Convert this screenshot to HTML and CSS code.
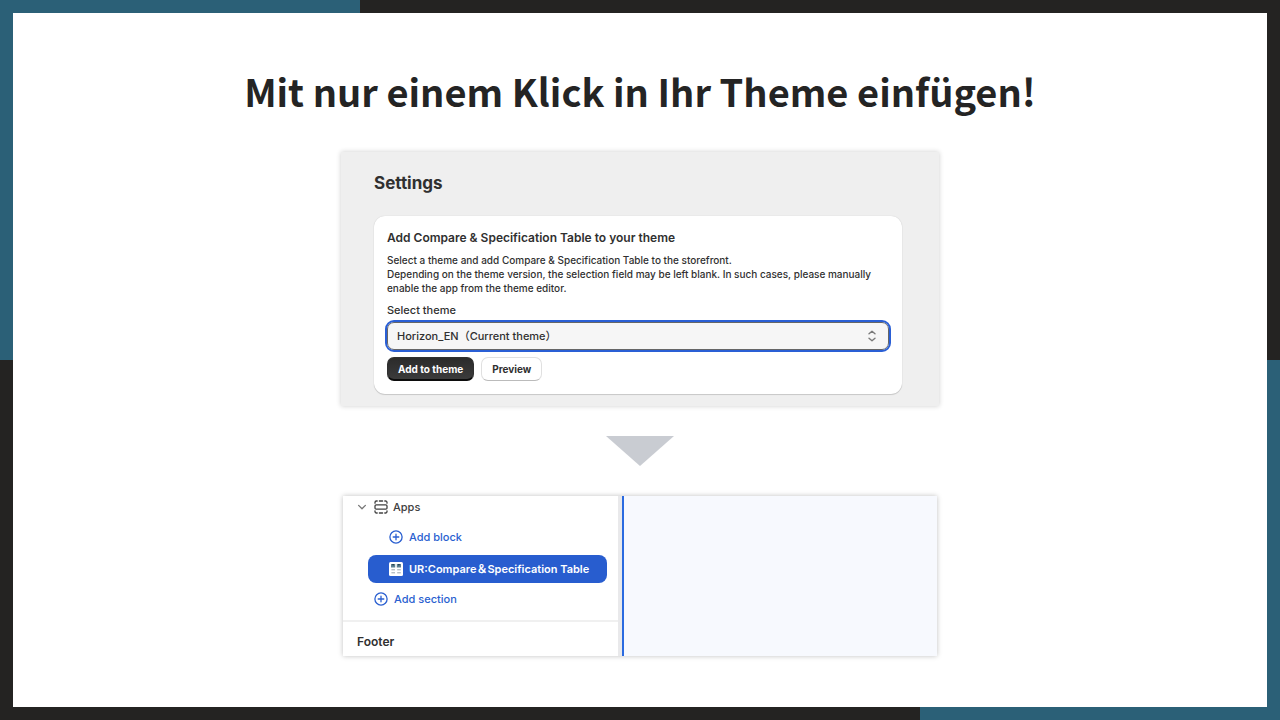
FILE: index.html
```html
<!DOCTYPE html>
<html lang="de">
<head>
    <meta charset="UTF-8">
    <meta name="viewport" content="width=device-width, initial-scale=1.0">
    <title>Mit nur einem Klick in Ihr Theme einfügen!</title>
    <link rel="stylesheet" href="styles.css">
</head>
<body>
    <main class="slide">
        <h1>Mit nur einem Klick in Ihr Theme einfügen!</h1>

        <section class="settings" lang="en">
            <h2>Settings</h2>
            <form class="card">
                <h3>Add Compare &amp; Specification Table to your theme</h3>
                <p>Select a theme and add Compare &amp; Specification Table to the storefront.<br>
                Depending on the theme version, the selection field may be left blank. In such cases, please manually enable the app from the theme editor.</p>
                <label for="theme">Select theme</label>
                <div class="select-wrap">
                    <select id="theme">
                        <option>Horizon_EN（Current theme）</option>
                    </select>
                    <svg class="select-icon" viewBox="0 0 10 14" width="10" height="14">
                        <path d="M2 4.8 L5 2.2 L8 4.8 M2 9.2 L5 11.8 L8 9.2"/>
                    </svg>
                </div>
                <div class="buttons">
                    <button type="button" class="btn btn-primary">Add to theme</button>
                    <button type="button" class="btn">Preview</button>
                </div>
            </form>
        </section>

        <svg class="arrow" viewBox="0 0 68 30" width="68" height="30">
            <path d="M0 0 H68 L34 30 Z"/>
        </svg>

        <section class="editor" lang="en">
            <nav class="sidebar">
                <div class="row row-apps">
                    <svg class="icon chevron" viewBox="0 0 14 14">
                        <path d="M3.6 5.4 L7 8.8 L10.4 5.4"/>
                    </svg>
                    <svg class="icon" viewBox="0 0 14 14">
                        <path d="M1 3.2 V2.4 A1.4 1.4 0 0 1 2.4 1 H3.2 M5.4 1 H8.6 M10.8 1 H11.6 A1.4 1.4 0 0 1 13 2.4 V3.2"/>
                        <path d="M1 10.8 V11.6 A1.4 1.4 0 0 0 2.4 13 H3.2 M5.4 13 H8.6 M10.8 13 H11.6 A1.4 1.4 0 0 0 13 11.6 V10.8"/>
                        <rect x="1" y="4.9" width="12" height="4.2" rx="1.2"/>
                    </svg>
                    <span>Apps</span>
                </div>
                <a href="#" class="row row-block">
                    <svg class="icon" viewBox="0 0 14 14">
                        <circle cx="7" cy="7" r="6.1"/>
                        <path d="M7 4.2 V9.8 M4.2 7 H9.8"/>
                    </svg>
                    <span>Add block</span>
                </a>
                <a href="#" class="row row-active">
                    <svg class="app-icon" viewBox="0 0 14 14" width="14" height="14">
                        <rect width="14" height="14" rx="1.5" fill="#fff"/>
                        <path d="M2 2 H6.2 V5.6 H2 Z M7.8 2 H12 V5.6 H7.8 Z" fill="#5d8191"/>
                        <path d="M3 2 H5.2 L4.1 4 Z M8.8 2 H11 L9.9 4 Z" fill="#24404c"/>
                        <path d="M2.4 7.8 H6 M8.2 7.8 H11.8 M2.4 10.8 H6 M8.2 10.8 H11.8" stroke="#9aa5ad"/>
                    </svg>
                    <span>UR:Compare＆Specification Table</span>
                </a>
                <a href="#" class="row row-section">
                    <svg class="icon" viewBox="0 0 14 14">
                        <circle cx="7" cy="7" r="6.1"/>
                        <path d="M7 4.2 V9.8 M4.2 7 H9.8"/>
                    </svg>
                    <span>Add section</span>
                </a>
                <h2 class="footer-title">Footer</h2>
            </nav>
            <div class="canvas"></div>
        </section>
    </main>
</body>
</html>
```
FILE: styles.css
```css
* {
    margin: 0;
    padding: 0;
    box-sizing: border-box;
}

body {
    min-height: 100vh;
    padding: 13px;
    display: flex;
    background-color: #242322;
    background-image: linear-gradient(#2b6077, #2b6077), linear-gradient(#2b6077, #2b6077);
    background-size: 360px 50%;
    background-position: left top, right bottom;
    background-repeat: no-repeat;
    font-family: Inter, "Noto Sans CJK JP", sans-serif;
    color: #303030;
}

.slide {
    flex: 1;
    display: flex;
    flex-direction: column;
    align-items: center;
    padding: 46px 20px;
    background-color: #fff;
}

h1 {
    font-family: "Noto Sans CJK JP", sans-serif;
    font-size: 38px;
    font-weight: 700;
    line-height: 64px;
    color: #242424;
    text-align: center;
}

/* Settings */
.settings {
    width: 100%;
    max-width: 598px;
    margin-top: 29px;
    padding: 20px 37px 12px 33px;
    background-color: #efefef;
    box-shadow: 0 0 5px rgba(0, 0, 0, 0.2);
}

.settings h2 {
    margin-bottom: 22px;
    font-size: 17px;
    font-weight: 700;
    line-height: 22px;
}

.card {
    padding: 14px 13px 13px;
    background-color: #fff;
    border-radius: 11px;
    box-shadow: 0 1px 1px rgba(0, 0, 0, 0.15), 0 0 1px rgba(0, 0, 0, 0.2);
}

.card h3 {
    margin-bottom: 7px;
    font-size: 12px;
    font-weight: 600;
    line-height: 16px;
}

.card p {
    margin-bottom: 7px;
    font-size: 10px;
    font-weight: 500;
    line-height: 14px;
}

.card label {
    display: block;
    margin-bottom: 4px;
    font-size: 11px;
    font-weight: 500;
    line-height: 16px;
}

.select-wrap {
    position: relative;
    margin-bottom: 7px;
}

.select-wrap select {
    display: block;
    width: 100%;
    height: 28px;
    padding: 0 30px 0 9px;
    appearance: none;
    background-color: #f6f6f6;
    border: 1px solid #666;
    border-radius: 7px;
    outline: 2px solid #2a5fd5;
    font: inherit;
    font-size: 11px;
    font-weight: 500;
    color: #303030;
}

.select-icon {
    position: absolute;
    top: 7px;
    right: 12px;
    fill: none;
    stroke: #7a7a7a;
    stroke-width: 1.4;
    stroke-linecap: round;
    stroke-linejoin: round;
    pointer-events: none;
}

.buttons {
    display: flex;
    gap: 7px;
}

.btn {
    height: 24px;
    padding: 0 10px;
    background-color: #fff;
    border: 1px solid #e0e0e0;
    border-bottom-color: #bbb;
    border-radius: 7px;
    font: inherit;
    font-size: 10px;
    font-weight: 700;
    color: #303030;
    cursor: pointer;
}

.btn-primary {
    background-image: linear-gradient(#2b2b2b, #3b3b3b);
    border-color: #303030;
    border-bottom: 2px solid #0c0c0c;
    color: #fff;
}

.arrow {
    margin: 30px 0;
    fill: #c9ccd2;
}

/* Theme editor */
.editor {
    width: 100%;
    max-width: 594px;
    display: flex;
    box-shadow: 0 0 5px rgba(0, 0, 0, 0.25);
}

.sidebar {
    width: 275px;
    background-color: #fff;
    font-size: 11px;
    font-weight: 500;
    line-height: 14px;
}

.row {
    display: flex;
    align-items: center;
    gap: 6px;
    height: 28px;
    color: #2a5fd0;
    text-decoration: none;
}

.icon {
    width: 14px;
    height: 14px;
    fill: none;
    stroke: currentColor;
    stroke-width: 1.3;
    stroke-linecap: round;
    stroke-linejoin: round;
}

.chevron {
    color: #777;
}

.row-apps {
    height: 22px;
    margin-bottom: 5px;
    padding-left: 12px;
    gap: 5px;
    color: #404040;
}

.row-block {
    padding-left: 46px;
    margin-bottom: 4px;
}

.row-active {
    margin: 0 11px 2px 25px;
    padding-left: 21px;
    background-color: #285dcf;
    border-radius: 8px;
    font-weight: 600;
    color: #fff;
}

.row-active span {
    height: 14px;
}

.row-section {
    padding-left: 31px;
}

.footer-title {
    margin-top: 7px;
    padding: 6px 14px 0;
    border-top: 2px solid #f0f0f0;
    font-size: 12px;
    font-weight: 600;
    line-height: 28px;
}

.canvas {
    flex: 1;
    background-color: #f7f9fe;
    border-left: 2px solid #2a6ae0;
    box-shadow: -4px 0 0 #e9e9eb;
    margin-left: 4px;
}
```
